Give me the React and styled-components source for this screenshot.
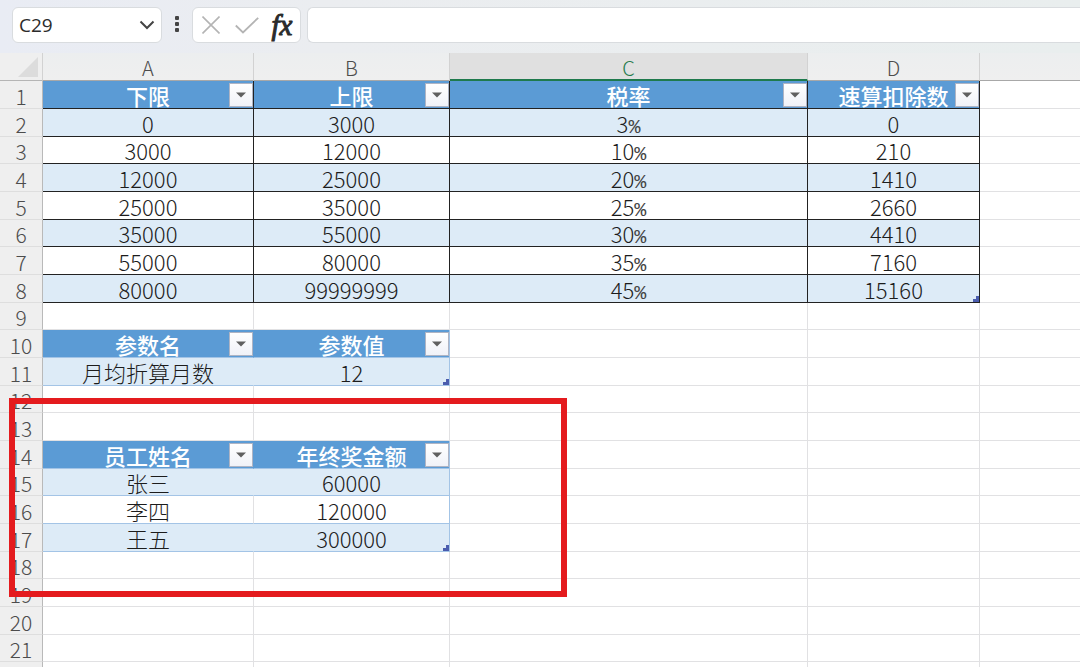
import React from "react";
import styled, { createGlobalStyle, css } from "styled-components";

const GlobalStyle = createGlobalStyle`
  *, *::before, *::after { box-sizing: border-box; }
  html, body, #root { height: 100%; }
  body {
    margin: 0;
    overflow: hidden;
    background: #fff;
    font-family: "Noto Sans CJK SC", "Noto Sans", sans-serif;
  }
  button, input { font: inherit; color: inherit; }
`;

const color = {
  head: "#5b9bd5",
  band: "#ddebf7",
  tableLine: "#a3c4e6",
  grid: "#e1e1e3",
  gutter: "#efefef",
  label: "#4c4c4c",
  ink: "#1c1c1c",
};

const Workbook = styled.div`
  display: flex;
  flex-direction: column;
  height: 100%;
  overflow: hidden;
`;

const FormulaBar = styled.header`
  display: flex;
  flex: none;
  align-items: flex-start;
  height: 53px;
  padding: 7px 0 0 12px;
  background: linear-gradient(90deg, #e9ecf4, #ebedf0 30%, #e9eeee);
`;

const box = css`
  display: flex;
  align-items: center;
  height: 36px;
  background: #fff;
  border: 1px solid #d9dcdf;
  border-radius: 6px;
`;

const NameBox = styled.div`
  ${box}
  width: 150px;
`;

const NameInput = styled.input`
  flex: 1;
  min-width: 0;
  padding: 0 0 0 6px;
  border: 0;
  outline: 0;
  background: none;
  color: #2b2b2b;
  font-family: "Open Sans", sans-serif;
  font-size: 19px;
`;

const IconButton = styled.button`
  display: flex;
  align-items: center;
  justify-content: center;
  width: ${(p) => p.$width}px;
  height: 34px;
  padding: 0;
  border: 0;
  background: none;
`;

const Actions = styled.div`
  ${box}
  width: 109px;
`;

const Fx = styled.span`
  color: #2b2b2b;
  font: italic 29px/32px "Liberation Serif", serif;
  -webkit-text-stroke: 1px #2b2b2b;
`;

const FormulaInput = styled.input`
  ${box}
  flex: 1;
  min-width: 0;
  margin-left: 6px;
  padding: 0 10px;
  border-right: 0;
  border-radius: 6px 0 0 6px;
  outline: 0;
  font-size: 18px;
`;

const Sheet = styled.main`
  position: relative;
  flex: 1;
  min-height: 0;
  overflow: hidden;
`;

const Grid = styled.table`
  width: 100%;
  table-layout: fixed;
  border-collapse: separate;
  border-spacing: 0;
`;

const Col = styled.col`
  width: ${(p) => (p.$width ? `${p.$width}px` : "auto")};
`;

const Row = styled.tr`
  height: 28px;
  tbody > &:nth-child(3n) { height: 27px; }
  > :last-child { border-right: 0; }
`;

const Corner = styled.td`
  padding: 0 4px 3px 0;
  background: ${color.gutter};
  border-right: 1px solid #d2d2d2;
  border-bottom: 1px solid #b5b5b5;
  line-height: 0;
  text-align: right;
  vertical-align: bottom;
`;

const ColumnLabel = styled.th`
  height: 28px;
  padding: 3px 0 0;
  color: ${(p) => (p.$active ? "#1f7a4d" : color.label)};
  background: ${(p) => (p.$active ? "#e0e0e0" : "linear-gradient(#eceeef, #efefef)")};
  border-right: 1px solid #d2d2d2;
  border-bottom: ${(p) => (p.$active ? "2px solid #1f7a4d" : "1px solid #a8a8a8")};
  font-size: 20px;
  font-weight: 300;
  line-height: 23px;
  vertical-align: top;
`;

const RowLabel = styled.th`
  padding: 2px 0 0;
  color: ${color.label};
  background: ${color.gutter};
  border-right: 1px solid #b9b9b9;
  border-bottom: 1px solid #dedede;
  font-size: 21px;
  font-weight: 300;
  line-height: 24px;
`;

const lines = {
  dark: css`
    border-right-color: #222;
    border-bottom-color: #222;
  `,
  blue: css`
    border-right-color: ${(p) => (p.$last ? color.tableLine : p.$fill || color.grid)};
    border-bottom-color: ${color.tableLine};
  `,
};

const cell = css`
  position: relative;
  padding: 0;
  background: ${(p) => p.$fill || "#fff"};
  border-right: 1px solid ${color.grid};
  border-bottom: 1px solid ${color.grid};
  font-size: 22px;
  line-height: 26px;
  text-align: center;
  white-space: nowrap;
  ${(p) => lines[p.$lines]}
`;

const Cell = styled.td`
  ${cell}
  color: ${color.ink};
  font-weight: 300;
`;

const HeadCell = styled.td`
  ${cell}
  color: #fff;
  font-weight: 500;
`;

const HeadContent = styled.div`
  display: grid;
  grid-template-columns: 1fr auto 1fr;
  align-items: center;
  height: 26px;
`;

const HeadText = styled.span`
  grid-column: 2;
`;

const FilterButton = styled.button`
  display: flex;
  align-items: center;
  justify-content: center;
  justify-self: end;
  width: 24px;
  height: 24px;
  padding: 0;
  background: linear-gradient(#fff, #f0f2f8);
  border: 1px solid #aeb4c4;
`;

const Percent = styled.span`
  font-family: "Liberation Mono", monospace;
  font-size: 20px;
  font-weight: 400;
  line-height: 16px;
  color: #444;
`;

const Handle = styled.svg`
  position: absolute;
  right: 0;
  bottom: 0;
`;

const Highlight = styled.div`
  position: absolute;
  top: 345px;
  left: 9px;
  width: 558px;
  height: 199px;
  border: 6px solid #e41b1e;
  pointer-events: none;
`;

const columns = [
  { name: "A", width: 211 },
  { name: "B", width: 196 },
  { name: "C", width: 358, active: true },
  { name: "D", width: 172 },
  { name: "" },
];

const tables = [
  {
    start: 1,
    lines: "dark",
    rows: [
      ["下限", "上限", "税率", "速算扣除数"],
      ["0", "3000", "3%", "0"],
      ["3000", "12000", "10%", "210"],
      ["12000", "25000", "20%", "1410"],
      ["25000", "35000", "25%", "2660"],
      ["35000", "55000", "30%", "4410"],
      ["55000", "80000", "35%", "7160"],
      ["80000", "99999999", "45%", "15160"],
    ],
  },
  {
    start: 10,
    lines: "blue",
    rows: [
      ["参数名", "参数值"],
      ["月均折算月数", "12"],
    ],
  },
  {
    start: 14,
    lines: "blue",
    rows: [
      ["员工姓名", "年终奖金额"],
      ["张三", "60000"],
      ["李四", "120000"],
      ["王五", "300000"],
    ],
  },
];

const rowNumbers = Array.from({ length: 21 }, (_, i) => i + 1);

function Value({ text }) {
  if (!text.endsWith("%")) return text;
  return (
    <>
      {text.slice(0, -1)}
      <Percent>%</Percent>
    </>
  );
}

function SheetCell({ row, col }) {
  const table = tables.find((t) => row >= t.start && row < t.start + t.rows.length);
  const index = table ? row - table.start : 0;
  const text = table && table.rows[index][col];
  if (text === undefined) return <Cell />;

  const last = col === table.rows[0].length - 1;
  if (index === 0) {
    return (
      <HeadCell $fill={color.head} $lines={table.lines} $last={last}>
        <HeadContent>
          <HeadText>{text}</HeadText>
          <FilterButton type="button" aria-label={`筛选 ${text}`}>
            <svg width="10" height="6" viewBox="0 0 10 6" aria-hidden="true">
              <path d="M0 0.5H10L5 5.5Z" fill="#606060" />
            </svg>
          </FilterButton>
        </HeadContent>
      </HeadCell>
    );
  }
  return (
    <Cell $fill={index % 2 ? color.band : undefined} $lines={table.lines} $last={last}>
      <Value text={text} />
      {last && index === table.rows.length - 1 && (
        <Handle width="6" height="6" viewBox="0 0 6 6" aria-hidden="true">
          <path d="M3 0H6V6H0V3H3Z" fill="#4a5cae" />
        </Handle>
      )}
    </Cell>
  );
}

export default function App() {
  return (
    <Workbook>
      <GlobalStyle />
      <FormulaBar>
        <NameBox>
          <NameInput aria-label="名称框" defaultValue="C29" />
          <IconButton type="button" $width={28} aria-label="展开名称框">
            <svg width="16" height="10" viewBox="0 0 16 10" fill="none" aria-hidden="true">
              <path d="M1.5 1.5L8 8L14.5 1.5" stroke="#444" strokeWidth="2" />
            </svg>
          </IconButton>
        </NameBox>
        <IconButton type="button" $width={30} aria-label="更多">
          <svg width="4" height="16" viewBox="0 0 4 16" fill="#444" aria-hidden="true">
            <rect y="0" width="4" height="4" rx="1" />
            <rect y="6" width="4" height="4" rx="1" />
            <rect y="12" width="4" height="4" rx="1" />
          </svg>
        </IconButton>
        <Actions>
          <IconButton type="button" $width={36} aria-label="取消">
            <svg width="18" height="18" viewBox="0 0 18 18" fill="none" aria-hidden="true">
              <path d="M0.5 0.5L17.5 17.5M17.5 0.5L0.5 17.5" stroke="#b4b4b4" strokeWidth="1.6" />
            </svg>
          </IconButton>
          <IconButton type="button" $width={35} aria-label="输入">
            <svg width="24" height="17" viewBox="0 0 24 17" fill="none" aria-hidden="true">
              <path d="M0.8 8.5L8 15.5L23.2 0.8" stroke="#b4b4b4" strokeWidth="1.8" />
            </svg>
          </IconButton>
          <IconButton type="button" $width={36} aria-label="插入函数">
            <Fx>fx</Fx>
          </IconButton>
        </Actions>
        <FormulaInput aria-label="编辑栏" />
      </FormulaBar>
      <Sheet>
        <Grid>
          <colgroup>
            <Col $width={43} />
            {columns.map((c) => (
              <Col key={c.name} $width={c.width} />
            ))}
          </colgroup>
          <thead>
            <Row>
              <Corner>
                <svg width="20" height="20" viewBox="0 0 20 20" aria-hidden="true">
                  <path d="M20 0V20H0Z" fill="#dcdcdc" />
                </svg>
              </Corner>
              {columns.map((c) => (
                <ColumnLabel key={c.name} scope="col" $active={c.active}>
                  {c.name}
                </ColumnLabel>
              ))}
            </Row>
          </thead>
          <tbody>
            {rowNumbers.map((n) => (
              <Row key={n}>
                <RowLabel scope="row">{n}</RowLabel>
                {columns.map((c, i) => (
                  <SheetCell key={c.name} row={n} col={i} />
                ))}
              </Row>
            ))}
            <Row aria-hidden="true">
              <RowLabel />
              {columns.map((c) => (
                <Cell key={c.name} />
              ))}
            </Row>
          </tbody>
        </Grid>
        <Highlight />
      </Sheet>
    </Workbook>
  );
}
